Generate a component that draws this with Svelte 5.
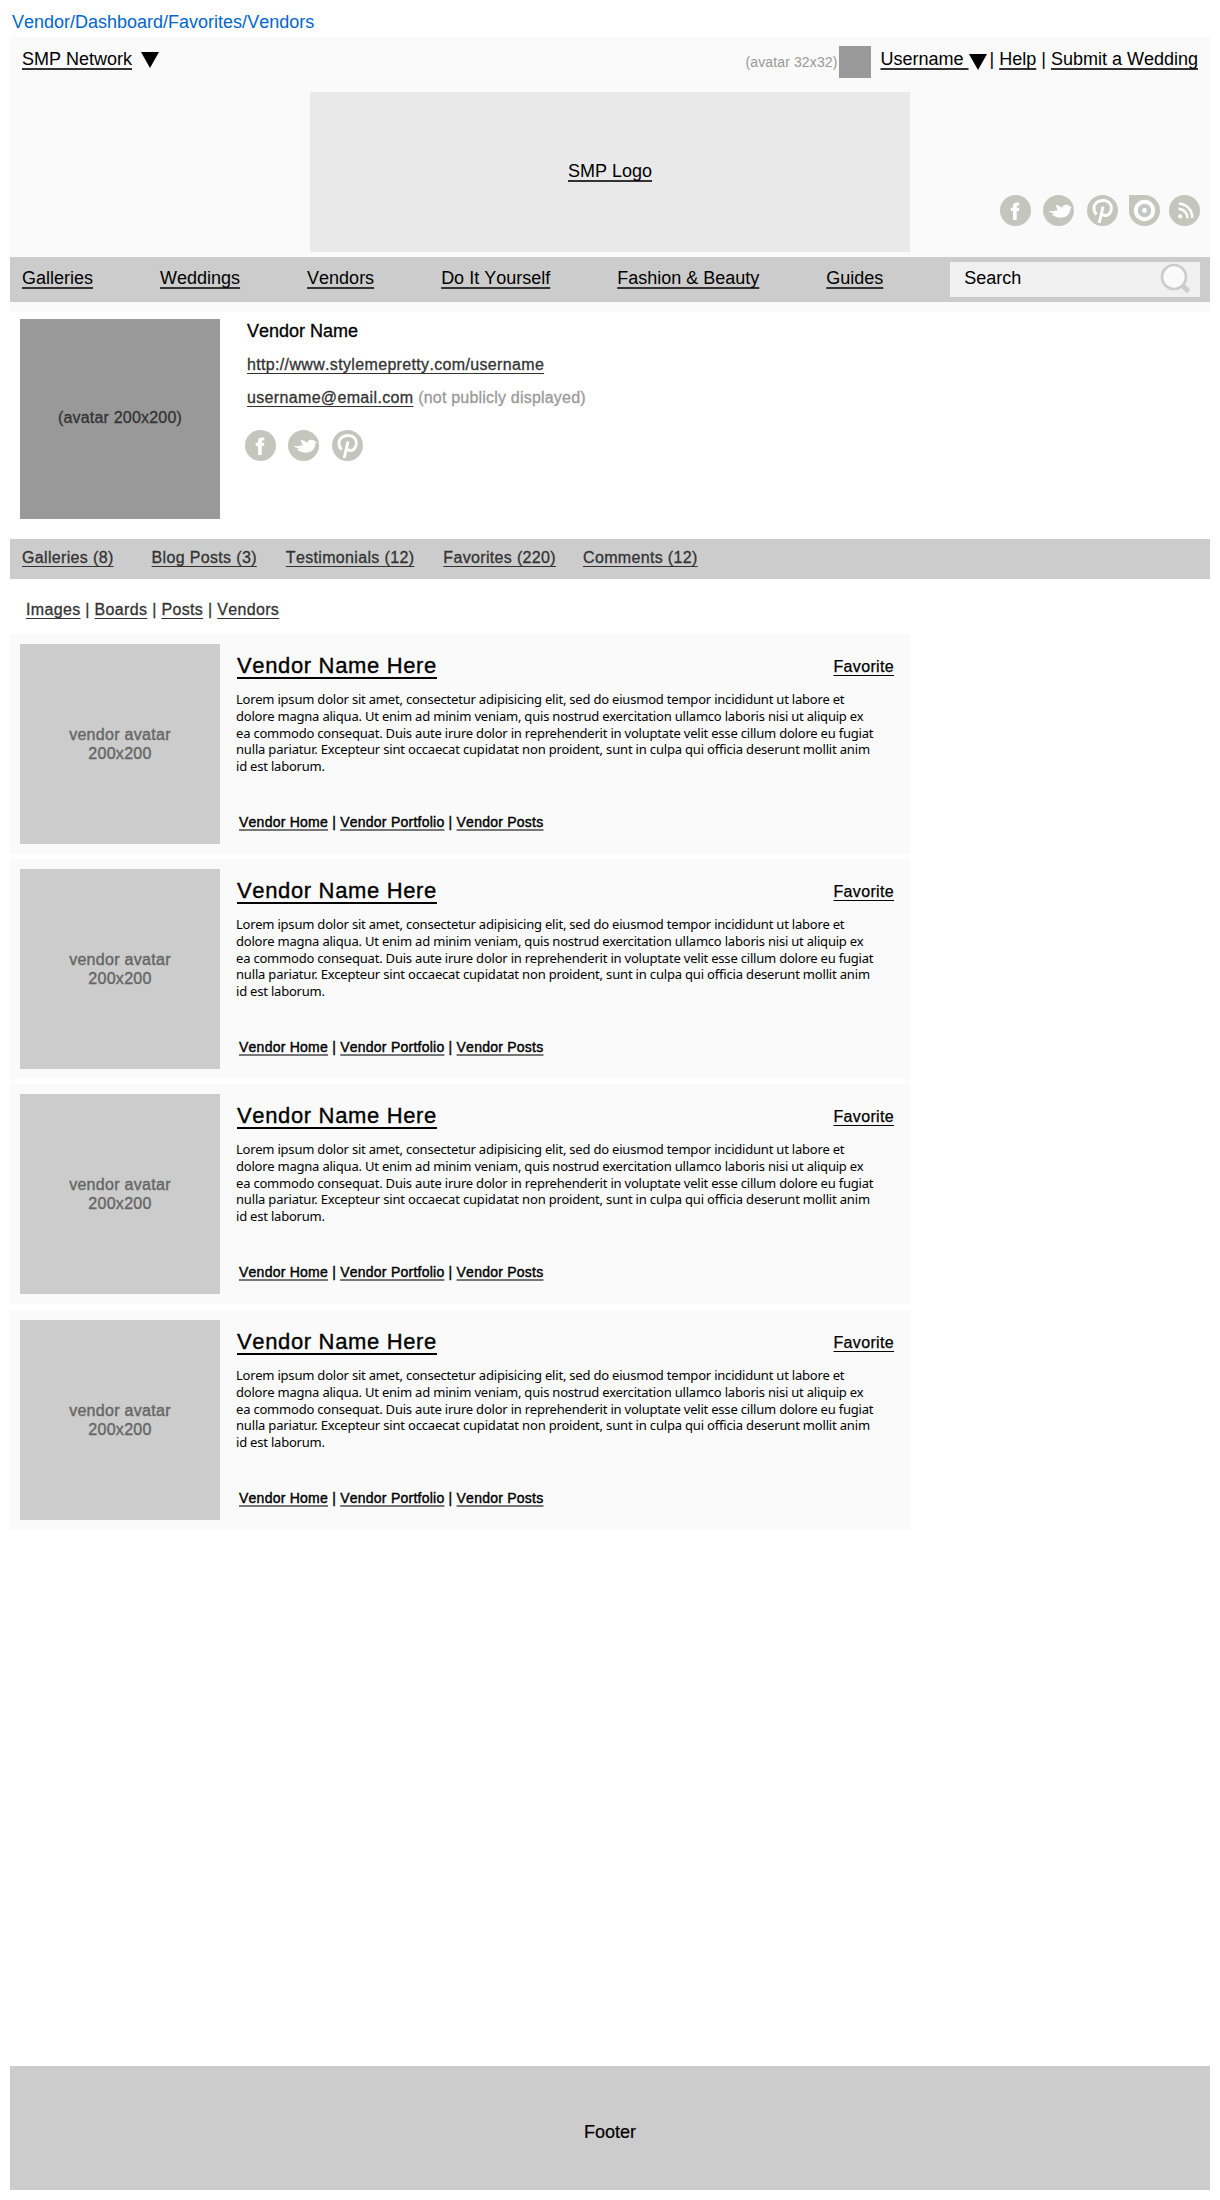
<script>
  const mainNav = ['Galleries', 'Weddings', 'Vendors', 'Do It Yourself', 'Fashion & Beauty', 'Guides'];
  const tabs = ['Galleries (8)', 'Blog Posts (3)', 'Testimonials (12)', 'Favorites (220)', 'Comments (12)'];
  const filters = ['Images', 'Boards', 'Posts', 'Vendors'];
  const vendorLinks = ['Vendor Home', 'Vendor Portfolio', 'Vendor Posts'];
  const blurb = [
    'Lorem ipsum dolor sit amet, consectetur adipisicing elit, sed do eiusmod tempor incididunt ut labore et',
    'dolore magna aliqua. Ut enim ad minim veniam, quis nostrud exercitation ullamco laboris nisi ut aliquip ex',
    'ea commodo consequat. Duis aute irure dolor in reprehenderit in voluptate velit esse cillum dolore eu fugiat',
    'nulla pariatur. Excepteur sint occaecat cupidatat non proident, sunt in culpa qui officia deserunt mollit anim',
    'id est laborum.',
  ];
  const vendors = [1, 2, 3, 4];
</script>

{#snippet social(name)}
  <svg class="social" viewBox="0 0 31 31" aria-label={name} role="img">
    {#if name === 'houzz'}
      <path class="disc" d="M0 0H15.5A15.5 15.5 0 1 1 0 15.5Z" />
    {:else}
      <circle class="disc" cx="15.5" cy="15.5" r="15.5" />
    {/if}
    {#if name === 'facebook'}
      <path class="mark" d="M13 25V16H10.7V12.8H13V11C13 8.3 14.500 7.500 16.800 7.500H19.300V10.600H17.800C16.900 10.600 16.700 11 16.700 11.700V12.800H19.300L19 16H16.700V25Z" />
    {:else if name === 'twitter'}
      <path class="mark" d="M5.500 15.600C7.500 16.600 10 16.400 11.500 15.700C12.800 15.200 13.800 15.400 14.800 15.800C14 13.500 13 11.500 12.500 9.800C15.500 10.200 17.800 11.500 19.300 13C19.600 10.800 21.500 9.600 23.800 9.800C25.300 9.900 26.200 10.700 26.800 11.500L29 12L27.400 13.400C27.700 17.500 24.500 22.200 18.500 22.600C14 22.900 10.300 21.300 8.800 19.300C9.800 19.400 10.700 19.200 11.300 18.800C9 18.400 6.700 17.300 5.500 15.600Z" />
    {:else if name === 'pinterest'}
      <path class="stroke p" d="M9.700 19.500C6 16.200 6 10 10 7.200C14.500 4 22 5.300 24 10.500C25.500 15 22.500 20.500 18.600 20.500C16.500 20.500 15.200 19.500 14.800 18.400" />
      <path class="stroke p" d="M16 11.500L12.200 28" />
    {:else if name === 'houzz'}
      <circle class="ring" cx="15.500" cy="15.500" r="8.700" />
      <circle class="core" cx="15.500" cy="15.500" r="3.900" />
    {:else}
      <circle class="mark" cx="11.200" cy="21.300" r="2.100" />
      <path class="stroke" d="M9.500 13.800A9.200 9.200 0 0 1 18.500 23.200M10 8.700A13.500 13.500 0 0 1 23.200 23" />
    {/if}
  </svg>
{/snippet}

{#snippet triangle()}
  <svg class="triangle" viewBox="0 0 18 16" aria-hidden="true"><path d="M0 0H18L9 16Z" /></svg>
{/snippet}

<div class="page">
  <div class="path">Vendor/Dashboard/Favorites/Vendors</div>

  <header>
    <div class="topbar">
      <a href="#network">SMP Network</a>{@render triangle()}
      <div class="account">
        <span class="hint">(avatar 32x32)</span>
        <span class="mini"></span>
        <a class="user" href="#user">Username&nbsp;</a>{@render triangle()}
        <span class="links">| <a href="#help">Help</a> | <a href="#submit">Submit a Wedding</a></span>
      </div>
    </div>
    <div class="brand">
      <div class="logo"><a href="#home">SMP Logo</a></div>
      <div class="socials">
        {#each ['facebook', 'twitter', 'pinterest', 'houzz', 'rss'] as name}
          {@render social(name)}
        {/each}
      </div>
    </div>
    <nav>
      {#each mainNav as item}<a href="#nav">{item}</a>{/each}
      <div class="search">
        <span>Search</span>
        <svg class="glass" viewBox="0 0 32 32" aria-hidden="true">
          <path d="M20.500 20.500L28.500 28.500" />
          <circle cx="14" cy="14" r="12" />
        </svg>
      </div>
    </nav>
  </header>

  <section class="profile">
    <div class="portrait">(avatar 200x200)</div>
    <div class="details">
      <h1>Vendor Name</h1>
      <p><a href="#site">http://www.stylemepretty.com/username</a></p>
      <p><a href="#mail">username@email.com</a> <span class="muted">(not publicly displayed)</span></p>
      <div class="socials">
        {#each ['facebook', 'twitter', 'pinterest'] as name}
          {@render social(name)}
        {/each}
      </div>
    </div>
  </section>

  <nav class="tabs">
    {#each tabs as tab}<a href="#tab">{tab}</a>{/each}
  </nav>

  <div class="filters">
    {#each filters as filter, i}{#if i}{' | '}{/if}<a href="#filter">{filter}</a>{/each}
  </div>

  <main>
    {#each vendors as id (id)}
      <article>
        <div class="thumb">vendor avatar<br />200x200</div>
        <div class="body">
          <div class="title">
            <h2><a href="#vendor">Vendor Name Here</a></h2>
            <a class="fav" href="#favorite">Favorite</a>
          </div>
          <p class="blurb">
            {#each blurb as line}<span>{line}</span>{/each}
          </p>
          <div class="vendor-links">
            {#each vendorLinks as link, i}{#if i}{' | '}{/if}<a href="#link">{link}</a>{/each}
          </div>
        </div>
      </article>
    {/each}
  </main>

  <footer>Footer</footer>
</div>

<style>
  :global(body) { background: #fff; }
  * { box-sizing: border-box; }
  .page {
    display: flex;
    flex-direction: column;
    width: 1220px;
    height: 2200px;
    padding: 0 10px 10px;
    font: 18px/20px "Liberation Sans", Arial, sans-serif;
    font-kerning: none;
    color: #000;
  }
  a {
    color: inherit;
    text-decoration: underline 1.500px #333;
    text-underline-offset: 3px;
    text-decoration-skip-ink: none;
  }
  h1, h2, p { margin: 0; font-weight: normal; }
  .path { height: 37px; padding: 12px 0 0 2px; color: #0066cc; }

  header { height: 275px; background: #fafafa; }
  .topbar { display: flex; height: 55px; padding: 12px 12px 0; white-space: pre; }
  .triangle { flex: none; width: 18px; height: 16px; margin: 3px 0 0 9px; }
  .account { display: flex; margin-left: auto; }
  .hint { margin: 3px 2px 0 0; font-size: 14px; letter-spacing: 0.120px; color: #999; }
  .mini { width: 32px; height: 32px; margin: -3px 9px 0 0; background: #999; }
  .account .triangle { margin: 5px 3px 0 0; }
  .brand { display: flex; height: 165px; }
  .logo {
    display: flex;
    align-items: center;
    justify-content: center;
    width: 600px;
    height: 160px;
    margin-left: 300px;
    padding: 0 0 2px 0;
    background: #e9e9e9;
  }
  .socials { display: flex; gap: 12px; }
  .social { width: 31px; height: 31px; flex: none; }
  .social:nth-child(3) { margin-left: 1px; }
  .brand .socials { padding: 103px 0 0 90px; }
  .brand .social:nth-child(4) { margin-left: -1px; }
  .brand .social:nth-child(5) { margin-left: -3px; }
  .disc { fill: #c4c5bc; }
  .mark { fill: #fff; }
  .stroke { fill: none; stroke: #fff; stroke-width: 2.500; }
  .stroke.p { stroke-width: 2.900; }
  .ring { fill: none; stroke: #fff; stroke-width: 4; }
  .core { fill: #fff; stroke: #c3c7ca; stroke-width: 3; }

  nav { display: flex; background: #ccc; white-space: nowrap; }
  header nav { height: 45px; padding: 11px 10px 0 12px; gap: 67px; }
  .search {
    display: flex;
    width: 250px;
    height: 35px;
    margin: -6px 0 0 auto;
    padding: 6px 8px 0 14px;
    background: #f0f0f0;
  }
  .glass { width: 32px; height: 32px; margin: -5px 0 0 auto; fill: #fafafa; stroke: #ccc; stroke-width: 2.700; }
  .glass path { stroke-width: 5; }

  .profile { display: flex; height: 227px; padding: 7px 10px 0; font-size: 16px; letter-spacing: 0.340px; color: #333; }
  .portrait {
    flex: none;
    width: 200px;
    height: 200px;
    padding-top: 89px;
    background: #999;
    text-align: center;
    letter-spacing: 0.200px;
    -webkit-text-stroke: 0.300px;
  }
  .details { padding-left: 27px; }
  h1 { margin: 2px 0 14px; font-size: 18px; line-height: 20px; letter-spacing: 0; color: #000; -webkit-text-stroke: 0.300px; }
  .details p { height: 33px; -webkit-text-stroke: 0.300px; }
  .details a, .tabs a, .filters a { text-decoration-thickness: 1px; }
  .muted { letter-spacing: 0.200px; color: #999; }
  .details .socials { padding: 9px 0 0; margin-left: -2px; }

  .tabs {
    height: 40px;
    padding: 9px 12px 0;
    font-size: 16px;
    letter-spacing: 0.340px;
    color: #333;
    -webkit-text-stroke: 0.300px;
  }
  .tabs a { margin-right: 29px; }
  .tabs a:first-child { margin-right: 38px; }
  .tabs a:nth-child(4) { margin-right: 27px; }
  .filters {
    height: 55px;
    padding: 21px 16px 0;
    font-size: 16px;
    letter-spacing: 0.340px;
    color: #333;
    -webkit-text-stroke: 0.300px;
  }

  article { display: flex; width: 900px; height: 220px; margin-bottom: 5px; padding: 10px; background: #fafafa; }
  article:nth-child(3) { margin-bottom: 6px; }
  .thumb {
    flex: none;
    width: 200px;
    height: 200px;
    padding-top: 81px;
    background: #ccc;
    text-align: center;
    font-size: 16px;
    line-height: 19px;
    letter-spacing: 0.300px;
    color: #666;
    -webkit-text-stroke: 0.400px;
  }
  .body { width: 658px; margin-left: 16px; }
  .title { display: flex; justify-content: space-between; padding: 10px 0 0 1px; height: 47px; }
  h2 { font-size: 22px; line-height: 24px; letter-spacing: 0.650px; -webkit-text-stroke: 0.350px; }
  h2 a { text-decoration-color: #000; text-underline-offset: 4px; }
  .fav { margin-top: 3px; font-size: 16px; letter-spacing: 0.340px; text-decoration: underline 1px #000; -webkit-text-stroke: 0.250px; }
  .blurb { font: 13px/16.750px "Noto Sans", "Open Sans", sans-serif; font-kerning: auto; letter-spacing: -0.205px; white-space: nowrap; }
  .blurb span { display: block; }
  .blurb span:nth-child(4) { letter-spacing: -0.180px; }
  .vendor-links {
    margin: 37px 0 0 3px;
    font-size: 14px;
    letter-spacing: 0.240px;
    -webkit-text-stroke: 0.400px;
  }
  .vendor-links a { text-decoration: underline 2px #777; text-underline-offset: 2px; }

  footer { height: 124px; margin-top: auto; padding-top: 56px; background: #ccc; text-align: center; -webkit-text-stroke: 0.200px; }
</style>
